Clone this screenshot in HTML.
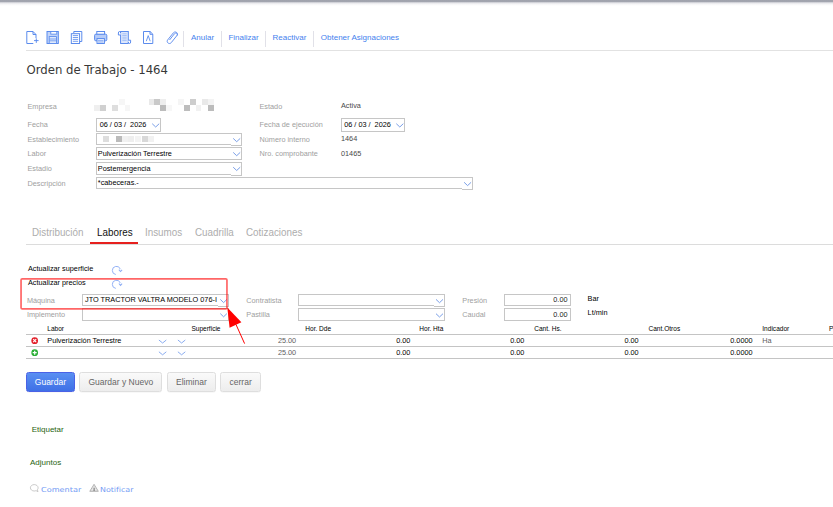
<!DOCTYPE html>
<html lang="es">
<head>
<meta charset="utf-8">
<title>Orden de Trabajo - 1464</title>
<style>
html,body{margin:0;padding:0;background:#fff;}
body{width:833px;height:507px;position:relative;overflow:hidden;font-family:"Liberation Sans",sans-serif;color:#000;}
.a{position:absolute;white-space:nowrap;line-height:1;}
.px{position:absolute;display:block;}
.topbar{left:0;top:0;width:833px;height:6px;background:linear-gradient(#a0a3ad 0,#a2a5af 26%,#cfd0d6 40%,#ececef 58%,#f9f9fa 78%,#fff 100%);}
.hl{position:absolute;height:1px;background:#e2e2e2;}
.vl{position:absolute;width:1px;background:#e1e1e8;}
.tb{font-size:8px;color:#447fee;top:33.5px;}
.title{font-family:"DejaVu Sans Condensed","DejaVu Sans","Liberation Sans",sans-serif;font-size:13px;color:#383838;left:26.5px;top:63px;}
.lb{font-size:7.3px;color:#a0a0a0;}
.val{font-size:7.3px;color:#4a4a4a;}
.in{position:absolute;box-sizing:border-box;border:1px solid #c6c6c6;background:#fff;font-size:7.3px;line-height:11px;padding-left:0.8px;white-space:nowrap;overflow:hidden;color:#000;}
.tab{font-size:10.5px;color:#adadad;top:226.6px;transform:scaleX(0.937);transform-origin:0 0;}
.tab.on{color:#111;}
.bk{font-size:7.3px;color:#000;}
.th{font-size:6.55px;color:#000;}
.td{font-size:7.3px;color:#000;text-align:right;}
.g{color:#606060;}
.btn{position:absolute;box-sizing:border-box;top:372px;height:20px;border:1px solid #dedede;border-radius:2.5px;background:linear-gradient(#fafafa,#ededed);font-size:8.5px;line-height:18.3px;text-align:center;color:#666;box-shadow:0 0.5px 0.5px rgba(0,0,0,0.06);}
.btn.p{background:linear-gradient(#5a8ff2,#3f70e6);border-color:#4a62e6;color:#fff;}
.gr{font-size:8px;color:#1f6410;}
.bl{font-family:"DejaVu Sans","Liberation Sans",sans-serif;font-size:6.9px;color:#739bf4;transform-origin:0 0;}
svg{position:absolute;overflow:visible;}
</style>
</head>
<body>
<div class="a topbar"></div>

<svg style="left:0;top:0" width="200" height="50" viewBox="0 0 200 50" fill="none" stroke="#5386ec" stroke-width="0.95">
  <path d="M26.8 31.500h6.200l3 3v3.500M26.800 31.500v12h6.500M33 31.500v3h3"/>
  <path d="M36.300 38.300v4.600M34 40.600h4.600" stroke-width="0.9"/>
  <rect x="47" y="31.500" width="11.300" height="12" fill="#c3d5f9"/>
  <rect x="50.800" y="31.500" width="6" height="2.600" fill="#fff" stroke-width="0.8"/>
  <rect x="49.200" y="36.600" width="7.300" height="6.900" fill="#dfe9fc" stroke-width="0.8"/>
  <path d="M49.500 39h6.600M49.500 40.800h6.600" stroke-width="0.700"/>
  <path d="M73.800 33.200v-1.700h8v10h-1.800"/>
  <rect x="71.300" y="33.700" width="8.300" height="9.800" fill="#fff"/>
  <path d="M72.800 35.600h5.300M72.800 37.500h5.300M72.800 39.400h5.300M72.800 41.300h5.300" stroke-width="0.800"/>
  <rect x="96.800" y="31.500" width="7.800" height="3" fill="#fff"/>
  <rect x="94.600" y="34.200" width="12.200" height="6.600" rx="1.200" fill="#b6ccf8"/>
  <rect x="97" y="38.600" width="7.400" height="4.900" fill="#eaf0fd"/>
  <path d="M98 40.600h5.400M98 42h5.400" stroke-width="0.600"/>
  <rect x="120.600" y="31.500" width="7.700" height="12" fill="#dfe8fc"/>
  <path d="M120.600 35h-2.200v-2a1.100 1.500 0 0 1 2.200 0" fill="#fff"/>
  <path d="M128.300 40.200h2.300v1.800a1.150 1.500 0 0 1 -2.300 0" fill="#fff"/>
  <path d="M122.300 33.800h4.400M122.300 35.500h4.400M122.300 37.200h4.400M122.300 38.900h4.400M122.300 40.600h4.400" stroke-width="0.700" stroke="#8db0f3"/>
  <path d="M143.500 31.500h6.600l2.700 2.700v9.300h-9.300zM150 31.500v2.800h2.800"/>
  <path d="M146.300 41.200l1.900-5.600 2 5.600" stroke-width="0.850"/>
  <path d="M169.500 40l5-6.300c1.300-1.600 3.700 0.200 2.400 1.900l-5.700 7.100c-1.800 2.200-5.400-0.400-3.500-2.800l5.600-7c2-2.400 5.600 0.300 3.700 2.700" stroke-width="0.900"/>
</svg>

<div class="vl" style="left:183px;top:31px;height:16px"></div>
<div class="vl" style="left:221px;top:31px;height:16px"></div>
<div class="vl" style="left:265px;top:31px;height:16px"></div>
<div class="vl" style="left:313px;top:31px;height:16px"></div>
<div class="a tb" style="left:191px">Anular</div>
<div class="a tb" style="left:228.4px">Finalizar</div>
<div class="a tb" style="left:272.6px">Reactivar</div>
<div class="a tb" style="left:320.8px">Obtener Asignaciones</div>
<div class="hl" style="left:26px;top:50px;width:807px"></div>
<div class="a title">Orden de Trabajo - 1464</div>
<div class="a lb" style="left:27.5px;top:103.2px">Empresa</div>
<div class="a lb" style="left:27.5px;top:121.0px">Fecha</div>
<div class="a lb" style="left:27.5px;top:136.2px">Establecimiento</div>
<div class="a lb" style="left:27.5px;top:149.7px">Labor</div>
<div class="a lb" style="left:27.5px;top:165.2px">Estadio</div>
<div class="a lb" style="left:27.5px;top:179.8px">Descripción</div>
<i class="px" style="left:118.8px;top:99.2px;width:5.8px;height:5.8px;background:#f6f6f6"></i>
<i class="px" style="left:148.6px;top:99.2px;width:5.8px;height:5.8px;background:#e9e9e9"></i>
<i class="px" style="left:154.4px;top:99.2px;width:5.8px;height:5.8px;background:#c9c9c9"></i>
<i class="px" style="left:160.2px;top:99.2px;width:5.8px;height:5.8px;background:#eeeeee"></i>
<i class="px" style="left:178.4px;top:99.2px;width:5.8px;height:5.8px;background:#f5f5f5"></i>
<i class="px" style="left:189.9px;top:99.2px;width:5.8px;height:5.8px;background:#cdcdcd"></i>
<i class="px" style="left:202.4px;top:99.2px;width:5.8px;height:5.8px;background:#e9e9e9"></i>
<i class="px" style="left:208.2px;top:99.2px;width:5.8px;height:5.8px;background:#f3f3f3"></i>
<i class="px" style="left:94.2px;top:105.0px;width:5.8px;height:5.8px;background:#efefef"></i>
<i class="px" style="left:100.0px;top:105.0px;width:5.8px;height:5.8px;background:#d0d0d0"></i>
<i class="px" style="left:112.1px;top:105.0px;width:5.8px;height:5.8px;background:#dedede"></i>
<i class="px" style="left:124.6px;top:105.0px;width:5.8px;height:5.8px;background:#f6f6f6"></i>
<i class="px" style="left:160.2px;top:105.0px;width:5.8px;height:5.8px;background:#bcbcbc"></i>
<i class="px" style="left:166.0px;top:105.0px;width:5.8px;height:5.8px;background:#f7f7f7"></i>
<i class="px" style="left:184.1px;top:105.0px;width:5.8px;height:5.8px;background:#bdbdbd"></i>
<i class="px" style="left:195.7px;top:105.0px;width:5.8px;height:5.8px;background:#f1f1f1"></i>
<i class="px" style="left:208.2px;top:105.0px;width:5.8px;height:5.8px;background:#bcbcbc"></i>
<div class="in" style="left:96px;top:118px;width:64.8px;height:13.5px;padding-left:2.7px;line-height:11.5px">06 / 03 /&nbsp; 2026</div>

<div class="in" style="left:96px;top:133px;width:146px;height:12px;"></div>
<div class="in" style="left:231px;top:133px;width:11px;height:13px;border-left:none"></div>
<div class="in" style="left:96px;top:147px;width:146px;height:13px;line-height:11px">Pulverización Terrestre</div>
<div class="in" style="left:96px;top:162px;width:146px;height:12.5px;">Postemergencia</div>
<div class="in" style="left:231px;top:162px;width:11px;height:13.500px;border-left:none"></div>
<div class="in" style="left:96px;top:177px;width:377px;height:12px;line-height:10px">*cabeceras.-</div>



<div class="in" style="left:462px;top:177px;width:11px;height:13px;border-left:none"></div>

<i class="px" style="left:103.0px;top:135.7px;width:6px;height:6px;background:#dddddd"></i>
<i class="px" style="left:115.9px;top:135.7px;width:6px;height:6px;background:#bbbbbb"></i>
<i class="px" style="left:122.0px;top:135.7px;width:6px;height:6px;background:#f1f1f1"></i>
<i class="px" style="left:128.4px;top:135.7px;width:6px;height:6px;background:#eeeeee"></i>
<i class="px" style="left:135.0px;top:135.7px;width:6px;height:6px;background:#f3f3f3"></i>
<i class="px" style="left:141.9px;top:135.7px;width:6px;height:6px;background:#d8d8d8"></i>
<i class="px" style="left:147.6px;top:135.7px;width:6px;height:6px;background:#f1f1f1"></i>
<div class="a lb" style="left:259.5px;top:103.2px">Estado</div>
<div class="a lb" style="left:259.5px;top:121.2px">Fecha de ejecución</div>
<div class="a lb" style="left:259.5px;top:136.4px">Número interno</div>
<div class="a lb" style="left:259.5px;top:150.1px">Nro. comprobante</div>
<div class="a val" style="left:341px;top:101.7px">Activa</div>
<div class="in" style="left:341px;top:118px;width:64px;height:13.5px;padding-left:2.2px;line-height:11.5px">06 / 03 /&nbsp; 2026</div>

<div class="a val" style="left:341px;top:135.2px">1464</div>
<div class="a val" style="left:341px;top:149.7px">01465</div>
<div class="a tab" style="left:32.4px">Distribución</div>
<div class="a tab on" style="left:96.7px">Labores</div>
<div class="a tab" style="left:144.8px">Insumos</div>
<div class="a tab" style="left:194.5px">Cuadrilla</div>
<div class="a tab" style="left:245.8px">Cotizaciones</div>
<div class="hl" style="left:26px;top:244px;width:807px;background:#dcdcdc"></div>
<div class="a" style="left:90px;top:242px;width:48px;height:2px;background:#e6201e"></div>
<div class="a bk" style="left:28px;top:264.9px">Actualizar superficie</div>
<div class="a bk" style="left:28px;top:278.7px">Actualizar precios</div>
<div class="a lb" style="left:26.9px;top:297.2px">Máquina</div>
<div class="a lb" style="left:26.9px;top:311.1px">Implemento</div>
<div class="in" style="left:82px;top:294px;width:146.5px;height:12px;padding-left:2px;line-height:10.5px">JTO TRACTOR VALTRA MODELO 076-I</div>
<div class="in" style="left:217.500px;top:294px;width:11px;height:13px;border-left:none"></div>
<div class="in" style="left:82px;top:308px;width:146.5px;height:12.7px;"></div>


<div class="a lb" style="left:246.3px;top:297.2px">Contratista</div>
<div class="a lb" style="left:246.3px;top:311.1px">Pastilla</div>
<div class="in" style="left:298px;top:294px;width:147px;height:12px;"></div>
<div class="in" style="left:434px;top:294px;width:11px;height:13px;border-left:none"></div>
<div class="in" style="left:298px;top:308px;width:147px;height:12.7px;"></div>


<div class="a lb" style="left:462.3px;top:297.2px">Presión</div>
<div class="a lb" style="left:462.3px;top:311.1px">Caudal</div>
<div class="in" style="left:504px;top:294px;width:67px;height:12.2px;text-align:right;padding-right:2.500px;line-height:10.5px;color:#222">0.00</div>
<div class="in" style="left:504px;top:308px;width:67px;height:12.7px;text-align:right;padding-right:2.500px;line-height:11.5px;color:#222">0.00</div>
<div class="a bk" style="left:587.6px;top:294.6px">Bar</div>
<div class="a bk" style="left:587.6px;top:308.9px">Lt/min</div>
<div class="a th" style="left:47.3px;top:325.900px">Labor</div>
<div class="a th" style="left:191.4px;top:325.900px">Superficie</div>
<div class="a th" style="left:305.3px;top:325.900px">Hor. Dde</div>
<div class="a th" style="left:419.3px;top:325.900px">Hor. Hta</div>
<div class="a th" style="left:534.2px;top:325.900px">Cant. Hs.</div>
<div class="a th" style="left:648.5px;top:325.900px">Cant.Otros</div>
<div class="a th" style="left:762.3px;top:325.900px">Indicador</div>
<div class="a th" style="left:829px;top:325.900px">P</div>
<div class="hl" style="left:26px;top:334px;width:807px;background:#c4c4c4"></div>
<div class="hl" style="left:26px;top:346px;width:807px;background:#c4c4c4"></div>
<div class="hl" style="left:26px;top:358px;width:807px;background:#c4c4c4"></div>
<div class="a td g" style="left:236.2px;width:60px;top:336.7px">25.00</div>
<div class="a td" style="left:350.4px;width:60px;top:336.7px">0.00</div>
<div class="a td" style="left:464.4px;width:60px;top:336.7px">0.00</div>
<div class="a td" style="left:578.6px;width:60px;top:336.7px">0.00</div>
<div class="a td" style="left:692.6px;width:60px;top:336.7px">0.0000</div>


<div class="a td g" style="left:236.2px;width:60px;top:348.5px">25.00</div>
<div class="a td" style="left:350.4px;width:60px;top:348.5px">0.00</div>
<div class="a td" style="left:464.4px;width:60px;top:348.5px">0.00</div>
<div class="a td" style="left:578.6px;width:60px;top:348.5px">0.00</div>
<div class="a td" style="left:692.6px;width:60px;top:348.5px">0.0000</div>


<div class="a td" style="left:47.300px;top:336.700px;text-align:left">Pulverización Terrestre</div>
<div class="a td g" style="left:762.300px;top:336.700px;text-align:left">Ha</div>
<svg style="left:30.800px;top:337.300px" width="7.400" height="7.400" viewBox="-3.700 -3.700 7.400 7.400"><circle r="3.350" fill="#e3212b"/><path d="M-1.500 -1.500L1.500 1.500M1.500 -1.500L-1.500 1.500" stroke="#fff" stroke-width="1.200"/></svg>
<svg style="left:30.800px;top:348.600px" width="7.400" height="7.400" viewBox="-3.700 -3.700 7.400 7.400"><circle r="3.350" fill="#2aae35"/><path d="M-2 0H2M0 -2V2" stroke="#fff" stroke-width="1.200"/></svg>
<div class="btn p" style="left:26px;width:48.8px">Guardar</div>
<div class="btn" style="left:79.3px;width:83px">Guardar y Nuevo</div>
<div class="btn" style="left:167px;width:48.8px">Eliminar</div>
<div class="btn" style="left:220.4px;width:40.5px">cerrar</div>
<div class="a gr" style="left:31.7px;top:426.4px">Etiquetar</div>
<div class="a gr" style="left:30px;top:459.4px">Adjuntos</div>
<div class="a bl" style="left:40.800px;top:487.400px;transform:scaleX(1.18)">Comentar</div>
<div class="a bl" style="left:99.500px;top:487.400px;transform:scaleX(1.147)">Notificar</div>
<svg style="left:0;top:0;pointer-events:none" width="833" height="507" viewBox="0 0 833 507"><path d="M152.20 123.70l3.50 3.30l3.50 -3.30" fill="none" stroke="#7a9fe8" stroke-width="1.0"/><path d="M233.20 138.40l3.50 3.30l3.50 -3.30" fill="none" stroke="#7a9fe8" stroke-width="1.0"/><path d="M233.20 152.40l3.50 3.30l3.50 -3.30" fill="none" stroke="#7a9fe8" stroke-width="1.0"/><path d="M233.20 167.20l3.50 3.30l3.50 -3.30" fill="none" stroke="#7a9fe8" stroke-width="1.0"/><path d="M464.10 182.30l3.50 3.30l3.50 -3.30" fill="none" stroke="#7a9fe8" stroke-width="1.0"/><path d="M396.30 123.70l3.50 3.30l3.50 -3.30" fill="none" stroke="#7a9fe8" stroke-width="1.0"/><g transform="translate(116.4 270.4)" fill="none" stroke="#8eaef5" stroke-width="0.95"><path d="M-0.600 4.100A4.100 4.100 0 1 1 3.900 -1.300"/><path d="M2.500 -0.800L4.100 1.100L5.700 -0.600" stroke-width="1.05"/></g><g transform="translate(116.4 284.3)" fill="none" stroke="#8eaef5" stroke-width="0.95"><path d="M-0.600 4.100A4.100 4.100 0 1 1 3.900 -1.300"/><path d="M2.500 -0.800L4.100 1.100L5.700 -0.600" stroke-width="1.05"/></g><path d="M220.30 299.40l3.30 3.20l3.30 -3.20" fill="none" stroke="#7aa2ee" stroke-width="1"/><path d="M220.30 313.60l3.30 3.20l3.30 -3.20" fill="none" stroke="#7aa2ee" stroke-width="1"/><path d="M436.00 299.40l3.50 3.30l3.50 -3.30" fill="none" stroke="#7a9fe8" stroke-width="1.0"/><path d="M436.00 313.70l3.50 3.30l3.50 -3.30" fill="none" stroke="#7a9fe8" stroke-width="1.0"/><rect x="21.05" y="278.8" width="205.9" height="30.1" rx="1.2" fill="none" stroke="#ff0000" stroke-opacity="0.6" stroke-width="1.7"/><path d="M227.300 307.600L241.400 322.200L229.600 327.800Z" fill="#ff0000"/><path d="M236 324.500L244.600 343.600" stroke="#ff0000" stroke-width="1" fill="none"/><path d="M158.90 340.00l3.70 3.00l3.70 -3.00" fill="none" stroke="#84a8ee" stroke-width="0.95"/><path d="M177.90 340.00l3.70 3.00l3.70 -3.00" fill="none" stroke="#84a8ee" stroke-width="0.95"/><path d="M158.90 351.80l3.70 3.00l3.70 -3.00" fill="none" stroke="#84a8ee" stroke-width="0.95"/><path d="M177.90 351.80l3.70 3.00l3.70 -3.00" fill="none" stroke="#84a8ee" stroke-width="0.95"/><path d="M34.2 484.600c-2.100 0-3.800 1.400-3.800 3.200s1.700 3.200 3.800 3.200c0.700 0 1.300-0.100 1.800-0.400l2 1.100-0.600-1.900c0.500-0.600 0.700-1.300 0.700-2 0-1.800-1.700-3.200-3.900-3.200z" fill="none" stroke="#bcbcbc" stroke-width="0.800"/><path d="M94.050 484.300L98.300 491.300H89.800Z" fill="#f6f6f6" stroke="#a0a0a0" stroke-width="0.800" stroke-linejoin="round"/><path d="M94.050 486L96.800 490.600H91.300Z" fill="none" stroke="#c4c4c4" stroke-width="0.500"/><path d="M94.100 487.700V490.900" stroke="#7a7a7a" stroke-width="1.200"/></svg>
</body>
</html>
